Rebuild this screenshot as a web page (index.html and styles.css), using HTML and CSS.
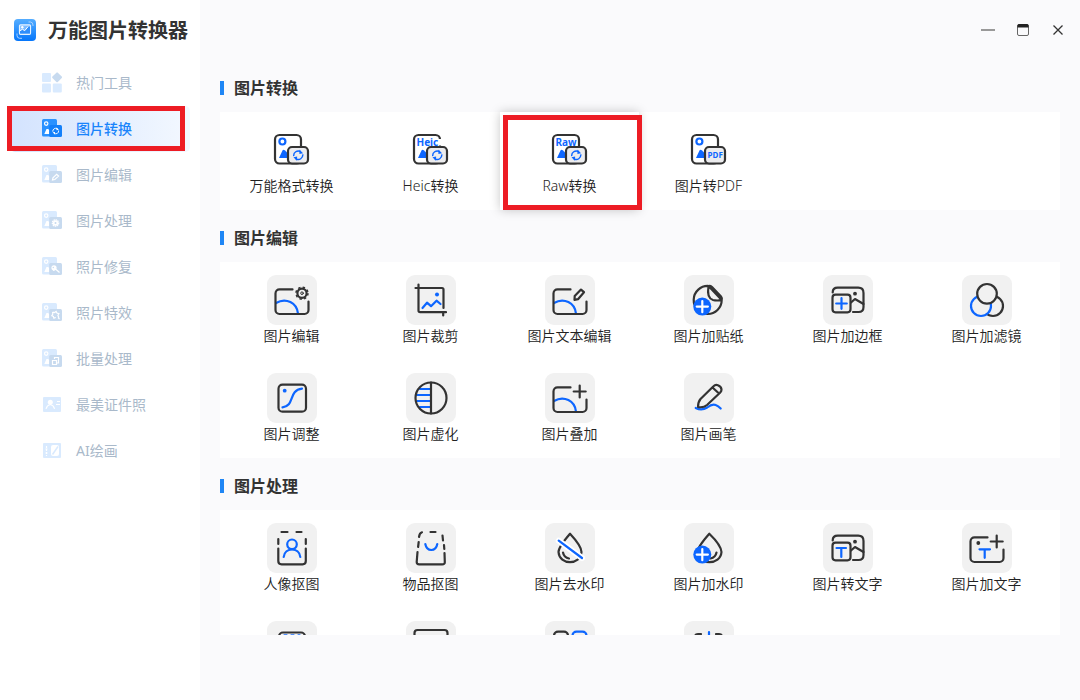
FILE: index.html
```html
<!DOCTYPE html>
<html lang="zh-CN">
<head>
<meta charset="utf-8">
<title>万能图片转换器</title>
<link rel="stylesheet" href="styles.css">
</head>
<body>
<svg class="defs" aria-hidden="true">
  <defs>
    <linearGradient id="logo-fill" x1="0" y1="0" x2="0" y2="1">
      <stop offset="0" stop-color="#55adff"/>
      <stop offset="1" stop-color="#0576fb"/>
    </linearGradient>
  </defs>
  <symbol id="sync" viewBox="0 0 12 12">
    <path d="M1.300 7A4.800 4.800 0 0 1 8.500 2.200M10.700 5A4.800 4.800 0 0 1 3.500 9.800" fill="none" stroke="currentColor" stroke-width="1.500"/>
    <path d="M7.200 0v4.600l3.800-.6zM4.800 12V7.400L1 8z" fill="currentColor"/>
  </symbol>
  <symbol id="nav-photo" viewBox="0 0 24 24">
    <rect class="n1" x="2" y="3" width="15" height="17.500" rx="1.500"/>
    <circle class="nl" cx="6.200" cy="7.600" r="1.700"/>
    <path class="nf" d="M4.300 18l2.200-5h1.800l1 1.500V18z"/>
    <rect class="n2" x="9.200" y="9" width="12.800" height="12" rx="1.500"/>
  </symbol>
  <symbol id="frame" viewBox="0 0 50 50">
    <path class="k" d="M25.500 14.400H12.500a4 4 0 0 0-4 4V35a4 4 0 0 0 4 4h25a4 4 0 0 0 4-4v-8.500"/>
  </symbol>
  <symbol id="hill" viewBox="0 0 50 50">
    <path class="b" d="M9 28C19 22 30 28 31 38.600"/>
  </symbol>
  <symbol id="plus" viewBox="0 0 50 50">
    <path class="k" d="M34.700 12.500v12M28.700 18.500h12"/>
  </symbol>
  <symbol id="convert" viewBox="0 0 50 50">
    <rect class="k" x="8" y="10" width="26" height="28.500" rx="4.500"/>
    <path class="bf" d="M12 33l3.500-7.500q1-1.500 2.500 0l2 2V33z"/>
    <rect class="k box" x="21" y="22" width="20" height="16.500" rx="4"/>
  </symbol>
  <symbol id="stack" viewBox="0 0 50 50">
    <path class="k" d="M9.700 17.500q0-4.800 5-4.800h20.500q5.300 0 5.300 5.300v14q0 5-5 5H30"/>
    <rect class="k" x="9.500" y="19.700" width="18" height="17.600" rx="3"/>
    <circle class="kf" cx="32" cy="18.700" r="1.900"/>
    <path class="k" d="M28 27.500l4-3.500 8.500 5"/>
  </symbol>
</svg>

<div class="app">
  <aside class="sidebar">
    <div class="brand">
      <svg class="logo" viewBox="0 0 22 22" aria-hidden="true">
        <rect width="22" height="22" rx="4" fill="url(#logo-fill)"/>
        <path d="M3 14.500v2Q3 19 5.500 19.300h2.500M14.500 3h2q2.500.3 2.500 3v1" fill="none" stroke="#a9d2ff"/>
        <rect x="5.500" y="5.800" width="11" height="9.500" rx="1" fill="#7dbbff" stroke="#e4f1ff" stroke-width="1.200"/>
        <circle cx="8.300" cy="8.300" r="1.200" fill="#fff"/>
        <path d="M6 14.500v-2.500l2.500-1.500 2 1.500 3.500-4 2-.5v7z" fill="#2f8efb"/>
        <path d="M6 11.700l2.500-1.500 2.200 1.500 3.300-4" fill="none" stroke="#fff"/>
      </svg>
      <h1 class="title">万能图片转换器</h1>
    </div>
    <nav class="nav">
      <button class="nav-item"><svg viewBox="0 0 24 24"><rect class="n1" x="2" y="3" width="9" height="9" rx="1"/><rect class="n1" x="2" y="13.500" width="9" height="9" rx="1"/><rect class="n1" x="12.800" y="13.500" width="9" height="9" rx="1"/><rect class="n2" x="13.300" y="3.500" width="7.600" height="7.600" rx="1" transform="rotate(45 17.100 7.300)"/></svg>热门工具</button>
      <button class="nav-item active"><svg viewBox="0 0 24 24"><use href="#nav-photo"/><g class="glyph"><use href="#sync" x="12" y="11.300" width="7.500" height="7.500"/></g></svg>图片转换<span class="mark"></span></button>
      <button class="nav-item"><svg viewBox="0 0 24 24"><use href="#nav-photo"/><path class="nl" d="M12.500 18l.5-2.300 3.600-3.400 2 1.800-3.800 3.400z"/></svg>图片编辑</button>
      <button class="nav-item"><svg viewBox="0 0 24 24"><use href="#nav-photo"/><circle class="nl" cx="15.500" cy="15" r="3.200" stroke-dasharray="1.500 .6"/><circle class="nf" cx="15.500" cy="15" r="2.700"/><circle class="n2" cx="15.500" cy="15" r="1"/></svg>图片处理</button>
      <button class="nav-item"><svg viewBox="0 0 24 24"><use href="#nav-photo"/><circle class="nf" cx="14" cy="13.800" r="2.600"/><path class="nl" d="M15.500 15l4 3.500M13 16.500l3-1.500"/><circle class="n2" cx="13.300" cy="13.500" r=".7"/></svg>照片修复</button>
      <button class="nav-item"><svg viewBox="0 0 24 24"><use href="#nav-photo"/><path class="nl" d="M12.600 12l2 .5 1.500-1 .8 1.600 2 .6-1 1.800 1 2M18 17.500l1.500 1.500M12.600 12l.2 2-1 1.700 1.600.7.500 1.800 1.800-.8"/></svg>照片特效</button>
      <button class="nav-item"><svg viewBox="0 0 24 24"><use href="#nav-photo"/><path class="nl" d="M14.500 13v-1.500h4V17H17M12.500 14.500h4v4h-4z"/></svg>批量处理</button>
      <button class="nav-item"><svg viewBox="0 0 24 24"><rect class="n1" x="3" y="5" width="18" height="15" rx="1"/><circle class="nf" cx="10.300" cy="10.300" r="2.500"/><path class="nl" d="M6 16.800q1-3.500 4.300-4.300 3.300.8 4.300 4.300M17 9.500h3M16 12.500h4"/></svg>最美证件照</button>
      <button class="nav-item"><svg viewBox="0 0 24 24"><rect class="n1" x="3" y="5" width="18" height="15" rx="1"/><path class="nl" d="M6.500 8v10M5.500 11h2M5.500 15h2" stroke-dasharray="2 1"/><rect class="nf" x="11" y="7" width="8" height="11" rx="2"/><path class="pen" d="M12.500 16.500 18 8.500"/></svg>AI绘画</button>
    </nav>
  </aside>

  <main class="main">
    <header class="window-bar">
      <button class="win" aria-label="最小化"><svg viewBox="0 0 14 14"><path d="M0 7h14" stroke="#999" stroke-width="2"/></svg></button>
      <button class="win" aria-label="最大化"><svg viewBox="0 0 14 14"><rect x="1.500" y="1.500" width="11" height="11" rx="1.500" fill="none" stroke="#666"/><path d="M1.500 4.500V2.500q0-1.500 1.500-1.500h8q1.500 0 1.500 1.500v2z" fill="#222"/></svg></button>
      <button class="win" aria-label="关闭"><svg viewBox="0 0 14 14"><path d="M2.500 2.500l9 9M11.500 2.500l-9 9" stroke="#333" stroke-width="1.300"/></svg></button>
    </header>
    <div class="content">
      <section>
        <h2 class="heading">图片转换</h2>
        <div class="card plain">
          <button class="tool"><svg class="icon" viewBox="0 0 50 50"><use href="#convert"/><circle class="b" cx="15.400" cy="16.500" r="3"/><g class="blue"><use href="#sync" x="25.500" y="24.500" width="11.500" height="11.500"/></g></svg>万能格式转换</button>
          <button class="tool"><svg class="icon" viewBox="0 0 50 50"><use href="#convert"/><rect x="32" y="14" width="4" height="6.500" fill="#fff"/><text class="tag" x="10.500" y="21">Heic</text><g class="blue"><use href="#sync" x="25.500" y="24.500" width="11.500" height="11.500"/></g></svg>Heic转换</button>
          <button class="tool hover"><svg class="icon" viewBox="0 0 50 50"><use href="#convert"/><text class="tag" x="10.500" y="21">Raw</text><g class="blue"><use href="#sync" x="25.500" y="24.500" width="11.500" height="11.500"/></g></svg>Raw转换<span class="mark"></span></button>
          <button class="tool"><svg class="icon" viewBox="0 0 50 50"><use href="#convert"/><circle class="b" cx="15.400" cy="16.500" r="3"/><text class="tag small" x="31.200" y="33.300" text-anchor="middle">PDF</text></svg>图片转PDF</button>
        </div>
      </section>

      <section>
        <h2 class="heading">图片编辑</h2>
        <div class="card">
          <button class="tool"><svg class="icon" viewBox="0 0 50 50"><use href="#hill"/><use href="#frame"/><circle class="k" cx="35" cy="18.200" r="4.600"/><circle class="teeth" cx="35" cy="18.200" r="6"/><circle class="k thin" cx="35" cy="18.200" r="1.300"/></svg>图片编辑</button>
          <button class="tool"><svg class="icon" viewBox="0 0 50 50"><path class="k" d="M12.500 9.500v26q0 1.700 1.700 1.700H40M9.500 13H36q1.500 0 1.500 1.500V33M37.200 38v2.500"/><circle class="bf" cx="31" cy="19.500" r="2"/><path class="b" d="M16.500 33l4.500-5.300 4 3.500 5.500-5.500 4 3.300"/></svg>图片裁剪</button>
          <button class="tool"><svg class="icon" viewBox="0 0 50 50"><use href="#hill"/><use href="#frame"/><path class="k" d="M36 14.600l3 2.600-6 7-3.500.6.200-3.700z"/></svg>图片文本编辑</button>
          <button class="tool"><svg class="icon" viewBox="0 0 50 50"><path class="k" d="M24.500 11A14 14 0 1 0 37.700 25zM24.500 11.500q-2 11.500 4.500 13.500 4 1 8.500 0M24.500 11q2-.3 3.500 1L37 21.500q1.200 1.500.7 3.500"/><circle class="bf" cx="18.300" cy="31.600" r="9"/><path class="w" d="M18.300 26v11.200M12.700 31.600h11.200"/></svg>图片加贴纸</button>
          <button class="tool"><svg class="icon" viewBox="0 0 50 50"><use href="#stack"/><path class="b" d="M18.500 23.200v10.600M13.200 28.500h10.600"/></svg>图片加边框</button>
          <button class="tool"><svg class="icon" viewBox="0 0 50 50"><circle class="k" cx="31" cy="31" r="10"/><circle class="b box2" cx="19" cy="31" r="10"/><circle class="k box2" cx="25" cy="18.800" r="9.800"/></svg>图片加滤镜</button>
          <button class="tool"><svg class="icon" viewBox="0 0 50 50"><rect class="k" x="11.500" y="11.700" width="27.500" height="27" rx="4"/><circle class="bf" cx="17.700" cy="17.700" r="1.900"/><path class="b" d="M15.500 34.300c12.500-1 5.500-17 19.500-18.600"/></svg>图片调整</button>
          <button class="tool"><svg class="icon" viewBox="0 0 50 50"><path class="b" d="M14 16h11M11 22h14M11 28h14M14 34h11"/><circle class="k" cx="25" cy="25" r="15.500"/><path class="k" d="M25 9.500v31"/></svg>图片虚化</button>
          <button class="tool"><svg class="icon" viewBox="0 0 50 50"><use href="#hill"/><use href="#frame"/><use href="#plus"/></svg>图片叠加</button>
          <button class="tool"><svg class="icon" viewBox="0 0 50 50"><path class="b" d="M11.700 35q6 3 11.500-.500 5-4 8.500-2.500 2.500 1 5 3.500"/><path class="k box2" d="M14 34q0-5 2.500-8L29.500 13.200q2-2.200 4.500-1 3.500 1.500 3.500 4.500 0 1.500-1.500 3L23 32q-3.500 3-9 2zM28.500 14.500l6.500 6"/></svg>图片画笔</button>
        </div>
      </section>

      <section>
        <h2 class="heading">图片处理</h2>
        <div class="card">
          <button class="tool"><svg class="icon" viewBox="0 0 50 50"><path class="k" d="M14.500 9h6M29.500 9h5M11.300 16v5M38.800 16v5M11.300 25.500V38q0 3.300 3.300 3.300h21q3.200 0 3.200-3.300V25.500"/><circle class="b" cx="25" cy="21.300" r="4.800"/><path class="b" d="M16.700 34c1-10 15.600-10 16.600 0"/></svg>人像抠图</button>
          <button class="tool"><svg class="icon" viewBox="0 0 50 50"><path class="k" d="M13 14q.5-4 3-4.700M24.500 9h5M36.500 12.500l.5 5M12.700 19l-.6 5M38 22l.3 4M11.500 29l-.8 10q0 2.300 2.500 2.300h23q2.800 0 2.600-2.300L38.500 30"/><path class="b" d="M19.300 21c1.500 8 10.500 8 12 0"/></svg>物品抠图</button>
          <button class="tool"><svg class="icon" viewBox="0 0 50 50"><path class="k" d="M25 10.700Q13.500 24 13.500 29c1 13.500 22 13.500 23 0Q36.500 23 25 10.700zM18 29.500q1 5 6 6"/><path class="halo" d="M13.700 17.700 37 35"/><path class="b" d="M13.700 17.700 37 35"/></svg>图片去水印</button>
          <button class="tool"><svg class="icon" viewBox="0 0 50 50"><path class="k" d="M25.300 10.700Q13.500 24 13.500 29c1 13.500 23 13.500 24 0Q37 22 25.300 10.700zM32.500 29.500q-1 5-6 6"/><circle class="bf" cx="18.300" cy="31.600" r="9"/><path class="w" d="M18.300 26v11.200M12.700 31.600h11.200"/></svg>图片加水印</button>
          <button class="tool"><svg class="icon" viewBox="0 0 50 50"><use href="#stack"/><path class="b" d="M13.500 25h9.500M18.300 25v9"/></svg>图片转文字</button>
          <button class="tool"><svg class="icon" viewBox="0 0 50 50"><use href="#frame"/><use href="#plus"/><circle class="kf" cx="16.300" cy="20" r="1.900"/><path class="b" d="M17.500 26.300H28M22.700 26.300v8.500"/></svg>图片加文字</button>
          <button class="tool"><svg class="icon" viewBox="0 0 50 50"><rect class="k" x="12" y="11.500" width="26" height="28" rx="4"/><path class="b thin" d="M17 13.800h3M24 13.800h3M31 13.800h2"/></svg></button>
          <button class="tool"><svg class="icon" viewBox="0 0 50 50"><rect class="k" x="8.500" y="9" width="33" height="28" rx="3"/></svg></button>
          <button class="tool"><svg class="icon" viewBox="0 0 50 50"><rect class="k" x="9" y="10.700" width="14" height="14" rx="4"/><rect class="b" x="27.500" y="10.700" width="14" height="14" rx="4"/></svg></button>
          <button class="tool"><svg class="icon" viewBox="0 0 50 50"><path class="k" d="M17 13h-3q-3 0-3 3v18M32 13h3q3 0 3 3v18"/><path class="b" d="M25 11v30"/></svg></button>
        </div>
      </section>
    </div>
  </main>
</div>
</body>
</html>
```

FILE: styles.css
```css
* { box-sizing: border-box; }

body {
  margin: 0;
  font-family: "Noto Sans", "Noto Sans CJK SC", sans-serif;
  font-size: 14px;
  color: #333;
  background: #fafafc;
}

button {
  margin: 0;
  padding: 0;
  border: 0;
  background: none;
  font: inherit;
  color: inherit;
  cursor: pointer;
}

.defs { position: absolute; width: 0; height: 0; }

.app { display: flex; height: 100vh; }

/* Sidebar */
.sidebar { flex: 0 0 200px; background: #fff; }

.brand {
  display: flex;
  align-items: center;
  gap: 12px;
  height: 60px;
  padding-left: 14px;
}

.logo { width: 22px; height: 22px; }

.title {
  margin: 0;
  padding-top: 2px;
  font-size: 20px;
  line-height: 28px;
  font-weight: 700;
  white-space: nowrap;
}

.nav { display: flex; flex-direction: column; padding: 0 10px; }

.nav-item {
  --tone-1: #d9eafe;
  --tone-2: #c7daef;
  position: relative;
  display: flex;
  align-items: center;
  gap: 12px;
  height: 46px;
  padding: 0 0 2px 30px;
  border-radius: 5px;
  color: #a9b9ca;
}

.nav-item svg { width: 24px; height: 24px; }

.nav-item.active {
  --tone-1: #2b92ff;
  --tone-2: #1480fa;
  color: #1a84fb;
  font-weight: 500;
  background: linear-gradient(90deg, #d3e3fe, #f3f8ff);
}

.n1 { fill: var(--tone-1); }
.n2 { fill: var(--tone-2); }
.nl { fill: none; stroke: #fff; stroke-width: 1.2; }
.nf { fill: #fff; }
.pen { stroke: var(--tone-1); stroke-width: 1.5; }
.glyph { color: #fff; }

.mark {
  position: absolute;
  border: 5px solid #ed1c24;
}

.nav-item .mark { inset: 0 5px 1px -3px; }

/* Main area */
.main {
  flex: 1;
  min-width: 0;
  display: flex;
  flex-direction: column;
  padding-bottom: 65px;
}

.window-bar {
  flex: 0 0 60px;
  display: flex;
  justify-content: flex-end;
  align-items: center;
  padding-right: 5px;
}

.win { width: 35px; height: 30px; display: grid; place-items: center; }
.win svg { width: 14px; height: 14px; }

.content { flex: 1; min-height: 0; padding: 0 20px; overflow: hidden; }

.heading {
  display: flex;
  align-items: center;
  gap: 10px;
  margin: 0;
  padding: 16px 0 12px;
  font-size: 16px;
  line-height: 24px;
  font-weight: 700;
}

.heading::before {
  content: "";
  width: 4px;
  height: 14px;
  background: #1f86f5;
}

.card {
  display: grid;
  grid-template-columns: repeat(6, 1fr);
  grid-auto-rows: 98px;
  padding: 0 4px 0 2px;
  background: #fff;
}

.tool {
  position: relative;
  display: flex;
  flex-direction: column;
  align-items: center;
  padding-top: 13px;
  line-height: 22px;
  font-weight: 350;
  color: #222;
  white-space: nowrap;
}

.icon {
  width: 50px;
  height: 50px;
  border-radius: 9px;
  background: #f1f1f1;
}

.plain .icon { background: none; }

.tool.hover {
  background: #fff;
  box-shadow: 0 0 10px rgba(0, 0, 0, .22);
}

.tool .mark { inset: 3px -3px 0 3px; }

/* Icon strokes and fills */
.k, .b, .w { fill: none; stroke-width: 2.2; stroke-linecap: round; stroke-linejoin: round; }
.k { stroke: #333; }
.b { stroke: #0d66ff; }
.w { stroke: #fff; }
.kf { fill: #333; }
.bf { fill: #0d66ff; }
.thin { stroke-width: 1; }
.box { fill: #ececee; }
.box2 { fill: #f1f1f1; }
.halo { stroke: #fff; stroke-width: 6; stroke-linecap: round; }
.teeth { fill: none; stroke: #333; stroke-width: 1.5; stroke-dasharray: 2.4 2.31; }
.blue { color: #0d66ff; }
.tag { fill: #0d66ff; font: 700 10px "Noto Sans", sans-serif; }
.tag.small { font-size: 8px; }
```
